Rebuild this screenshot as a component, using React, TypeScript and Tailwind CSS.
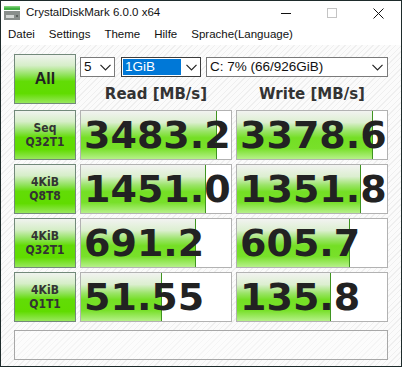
import React from "react";

const ROWS = [
  { top: "Seq", bottom: "Q32T1", read: "3483.2", write: "3378.6" },
  { top: "4KiB", bottom: "Q8T8", read: "1451.0", write: "1351.8" },
  { top: "4KiB", bottom: "Q32T1", read: "691.2", write: "605.7" },
  { top: "4KiB", bottom: "Q1T1", read: "51.55", write: "135.8" },
];

const MENU = ["Datei", "Settings", "Theme", "Hilfe", "Sprache(Language)"];

// CDM draws the bar on a log scale: 0.1 MB/s .. 10000 MB/s
function fill(v: string) {
  const n = parseFloat(v);
  return Math.max(0, Math.min(100, ((Math.log10(n) + 1) / 5) * 100));
}

const greenBtn =
  "border border-[#72897a] bg-[linear-gradient(to_bottom,#f0f3ef_0%,#d6eec8_22%,#8fe25a_42%,#62dc06_55%,#60dc00_80%,#98e85c_100%)]";

function Chevron() {
  return (
    <svg width="11" height="7" viewBox="0 0 11 7" className="shrink-0">
      <polyline points="0.5,0.8 5.5,5.8 10.5,0.8" fill="none" stroke="#222" strokeWidth="1.2" />
    </svg>
  );
}

function ValueBox({ value }: { value: string }) {
  return (
    <div className="relative h-[50px] w-[152px] overflow-hidden border border-[#b2b2b2] bg-white">
      <div
        className="absolute inset-y-0 left-0 border-r border-[#3f9420] bg-[linear-gradient(to_bottom,#f2f3f1_0%,#dcefd0_24%,#9ae468_42%,#74df24_56%,#78e02a_78%,#b6f08a_100%)]"
        style={{ width: `${fill(value)}%` }}
      />
      <div className="relative flex h-full items-center pl-[3px] font-['DejaVu_Sans',sans-serif] text-[38px] font-bold leading-none text-[#222]">
        {value}
      </div>
    </div>
  );
}

export default function App() {
  return (
    <div className="flex h-[367px] w-[402px] flex-col overflow-hidden border border-[#1e2b2b] bg-white font-['Liberation_Sans',Arial,sans-serif] text-[#111]">
      {/* title bar */}
      <div className="flex h-[24px] shrink-0 items-center">
        <svg width="16" height="14" viewBox="0 0 16 14" className="ml-[3px] mr-[6px]">
          <rect x="0" y="0" width="16" height="4" fill="#3fae3f" />
          <rect x="0" y="0" width="16" height="1.5" fill="#7fd27a" />
          <rect x="0" y="5" width="16" height="9" fill="#8a8f8c" />
          <rect x="2" y="9" width="8" height="3" fill="#d4d7d5" />
          <rect x="12" y="9" width="2" height="2" fill="#5c615e" />
        </svg>
        <span className="text-[11.5px]">CrystalDiskMark 6.0.0 x64</span>
        <div className="ml-auto flex h-full items-center">
          <div className="flex h-full w-[46px] items-center justify-center">
            <div className="h-px w-[10px] bg-[#111]" />
          </div>
          <div className="flex h-full w-[46px] items-center justify-center">
            <div className="h-[10px] w-[10px] border border-[#c4c4c4]" />
          </div>
          <div className="flex h-full w-[46px] items-center justify-center">
            <svg width="11" height="11" viewBox="0 0 11 11">
              <path d="M0.5 0.5 L10.5 10.5 M10.5 0.5 L0.5 10.5" stroke="#111" strokeWidth="1" />
            </svg>
          </div>
        </div>
      </div>

      {/* menu bar */}
      <div className="flex h-[20px] shrink-0 items-center gap-[14px] pl-[7px] text-[11.5px]">
        {MENU.map((m) => (
          <span key={m}>{m}</span>
        ))}
      </div>

      {/* client area */}
      <div className="flex flex-1 flex-col gap-[4px] bg-[repeating-linear-gradient(135deg,#fbfbfb_0px,#fbfbfb_3px,#efefef_3px,#efefef_4px)] pl-[13px] pt-[9px]">
        <div className="flex gap-[4px]">
          <div
            className={`flex h-[50px] w-[62px] items-center justify-center text-[16px] font-bold text-[#222] ${greenBtn}`}
          >
            All
          </div>
          <div className="flex w-[308px] flex-col">
            <div className="mt-[3px] flex h-[20px] items-center text-[13.5px]">
              <div className="flex h-[20px] w-[35px] items-center justify-between border border-[#7a7a7a] bg-white pl-[3px] pr-[3px]">
                <span>5</span>
                <Chevron />
              </div>
              <div className="ml-[6px] flex h-[20px] w-[80px] items-center justify-between border border-[#3c3c3c] bg-white p-px pr-[3px]">
                <span className="flex h-full w-[58px] items-center bg-[#0078d7] pl-[2px] text-white">
                  1GiB
                </span>
                <Chevron />
              </div>
              <div className="ml-[5px] flex h-[20px] w-[182px] items-center justify-between border border-[#7a7a7a] bg-white pl-[3px] pr-[4px]">
                <span>C: 7% (66/926GiB)</span>
                <Chevron />
              </div>
            </div>
            <div className="mt-[6px] flex font-['DejaVu_Sans',sans-serif] text-[15px] font-bold text-[#333]">
              <div className="w-[152px] text-center">Read [MB/s]</div>
              <div className="ml-[4px] w-[152px] text-center">Write [MB/s]</div>
            </div>
          </div>
        </div>

        {ROWS.map((r, i) => (
          <div key={i} className="flex gap-[4px]">
            <div
              className={`flex h-[50px] w-[62px] flex-col items-center justify-center font-['DejaVu_Sans_Condensed','DejaVu_Sans',sans-serif] text-[12px] font-bold leading-[14px] text-[#333] ${greenBtn}`}
            >
              <span>{r.top}</span>
              <span>{r.bottom}</span>
            </div>
            <ValueBox value={r.read} />
            <ValueBox value={r.write} />
          </div>
        ))}

        <div className="mt-[4px] h-[30px] w-[374px] border border-[#a8a8a8] bg-white/40" />
      </div>
    </div>
  );
}
